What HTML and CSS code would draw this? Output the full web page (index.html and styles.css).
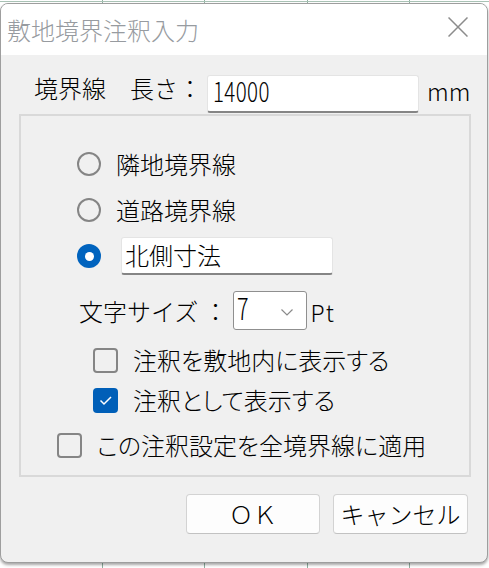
FILE: index.html
```html
<!DOCTYPE html>
<html lang="ja">
<head>
<meta charset="utf-8">
<title>敷地境界注釈入力</title>
<link rel="stylesheet" href="styles.css">
</head>
<body>
<div class="window">
  <div class="titlebar">
    <span class="title">敷地境界注釈入力</span>
    <svg class="close" width="20" height="20" viewBox="0 0 20 20"><path d="M0.5 0.5 L19.5 19.5 M19.5 0.5 L0.5 19.5" stroke="#8c8c8c" stroke-width="1.5" fill="none"/></svg>
  </div>
  <div class="client">
    <div class="length-row">
      <span class="label">境界線　長さ：</span>
      <div class="textbox length-box"><span class="digits">14000</span></div>
      <span class="unit">mm</span>
    </div>
    <div class="group">
      <div class="radio-row">
        <span class="radio"></span>
        <span class="text">隣地境界線</span>
      </div>
      <div class="radio-row">
        <span class="radio"></span>
        <span class="text">道路境界線</span>
      </div>
      <div class="radio-row">
        <span class="radio checked"></span>
        <div class="textbox name-box">北側寸法</div>
      </div>
      <div class="size-row">
        <span class="label">文字サイズ ：</span>
        <div class="combo">
          <span class="combo-value">7</span>
          <svg class="chevron" width="12" height="7" viewBox="0 0 12 7"><path d="M0.5 0.5 L6 6 L11.5 0.5" stroke="#8a8a8a" stroke-width="1.2" fill="none"/></svg>
        </div>
        <span class="unit pt">Pt</span>
      </div>
      <div class="check-row indent">
        <span class="check"></span>
        <span class="text prop">注釈を敷地内に表示する</span>
      </div>
      <div class="check-row indent">
        <span class="check checked"><svg width="25" height="25" viewBox="0 0 25 25"><path d="M7.5 12.5 L11 16 L18 9" stroke="#ffffff" stroke-width="1.5" fill="none"/></svg></span>
        <span class="text prop">注釈として表示する</span>
      </div>
      <div class="check-row all">
        <span class="check"></span>
        <span class="text prop">この注釈設定を全境界線に適用</span>
      </div>
    </div>
    <div class="buttons">
      <div class="button">ＯＫ</div>
      <div class="button">キャンセル</div>
    </div>
  </div>
</div>
</body>
</html>
```
FILE: styles.css
```css
html, body {
  margin: 0;
  padding: 0;
}
body {
  width: 489px;
  height: 568px;
  padding-top: 3px;
  box-sizing: border-box;
  overflow: hidden;
  background-color: #ffffff;
  background-image:
    linear-gradient(to bottom, transparent 1px, #a9c2b5 1px, #a9c2b5 2px, transparent 2px),
    linear-gradient(to right,
      transparent 102px, #8fb0a0 102px, #8fb0a0 103px, transparent 103px,
      transparent 204px, #8fb0a0 204px, #8fb0a0 205px, transparent 205px,
      transparent 307px, #8fb0a0 307px, #8fb0a0 308px, transparent 308px,
      transparent 409px, #8fb0a0 409px, #8fb0a0 410px, transparent 410px);
  font-family: "Noto Sans CJK JP", sans-serif;
  font-weight: 300;
  color: #000;
}
.window {
  width: 488px;
  height: 560px;
  box-sizing: border-box;
  border: 1px solid #9e9e9e;
  border-radius: 8px;
  background: #f0f0f0;
  box-shadow: 0 2px 3px rgba(0, 0, 0, 0.35);
  overflow: hidden;
  display: flex;
  flex-direction: column;
}
.titlebar {
  height: 51px;
  flex: none;
  background: #ffffff;
  display: flex;
  align-items: center;
  padding-left: 6px;
}
.title {
  font-size: 24px;
  line-height: 24px;
  color: #979ba0;
}
.close {
  margin-left: auto;
  margin-right: 19px;
  margin-top: -5px;
}
.client {
  flex: 1;
  display: flex;
  flex-direction: column;
}
.length-row {
  display: flex;
  align-items: flex-start;
  height: 38px;
  margin-top: 20px;
  margin-left: 33px;
}
.label {
  font-size: 24px;
  line-height: 24px;
  white-space: pre;
}
.length-row .label {
  margin-top: 1px;
}
.textbox {
  box-sizing: border-box;
  width: 212px;
  height: 38px;
  background: #ffffff;
  border: 1px solid #e4e4e4;
  border-bottom: 2px solid #858585;
  border-radius: 3px;
}
.length-box {
  margin-left: 5px;
  padding-left: 5px;
}
.digits {
  display: inline-block;
  font-size: 27px;
  line-height: 27px;
  margin-top: 1px;
  letter-spacing: 0.5px;
  transform: scaleX(0.76);
  transform-origin: left center;
}
.unit {
  font-size: 24px;
  line-height: 24px;
}
.length-row .unit {
  margin-left: 8px;
  margin-top: 4px;
}
.group {
  box-sizing: border-box;
  width: 452px;
  height: 363px;
  margin-top: 1px;
  margin-left: 18px;
  border: 2px solid #d9d9d9;
  padding-top: 29px;
  display: flex;
  flex-direction: column;
}
.radio-row {
  display: flex;
  align-items: center;
  height: 38px;
  margin-left: 56px;
  margin-bottom: 8px;
}
.radio {
  box-sizing: border-box;
  width: 24px;
  height: 24px;
  border: 2px solid #858585;
  border-radius: 50%;
  flex: none;
  display: flex;
  align-items: center;
  justify-content: center;
}
.radio.checked {
  border: none;
  background: #0063be;
}
.radio.checked::after {
  content: "";
  width: 9px;
  height: 9px;
  border-radius: 50%;
  background: #ffffff;
}
.text {
  font-size: 24px;
  line-height: 24px;
  margin-left: 15px;
  white-space: nowrap;
}
.prop {
  font-feature-settings: "palt" 1;
}
.name-box {
  margin-left: 20px;
  padding-left: 3px;
  padding-top: 5px;
  font-size: 24px;
  line-height: 24px;
}
.size-row {
  display: flex;
  align-items: flex-start;
  height: 39px;
  margin-left: 58px;
  margin-top: 8px;
}
.size-row .label {
  margin-top: 8px;
}
.combo {
  box-sizing: border-box;
  width: 74px;
  height: 39px;
  margin-left: 5px;
  background: #ffffff;
  border: 1px solid #8f8f8f;
  border-radius: 3px;
  display: flex;
  align-items: flex-start;
  padding-left: 3px;
}
.combo-value {
  display: inline-block;
  font-size: 30px;
  line-height: 30px;
  margin-top: 0px;
  transform: scaleX(0.72);
  transform-origin: left center;
}
.chevron {
  margin-left: auto;
  margin-right: 13px;
  margin-top: 17px;
}
.pt {
  margin-left: 4px;
  margin-top: 9px;
  font-size: 23px;
  letter-spacing: 1px;
}
.check-row {
  display: flex;
  align-items: center;
  height: 32px;
}
.check-row.indent {
  margin-left: 72px;
  margin-top: 14px;
}
.check-row.indent + .check-row.indent {
  margin-top: 8px;
}
.check-row.all {
  margin-left: 36px;
  margin-top: 13px;
}
.check {
  box-sizing: border-box;
  width: 25px;
  height: 25px;
  border: 2px solid #858585;
  border-radius: 4px;
  flex: none;
  display: flex;
}
.check.checked {
  border: none;
  background: #005fb8;
}
.check svg {
  display: block;
}
.buttons {
  display: flex;
  justify-content: flex-end;
  gap: 13px;
  margin-top: 17px;
  margin-right: 19px;
}
.button {
  box-sizing: border-box;
  width: 134px;
  height: 40px;
  background: #fdfdfd;
  border: 1px solid #d3d3d3;
  border-bottom-color: #c2c2c2;
  border-radius: 4px;
  display: flex;
  align-items: center;
  justify-content: center;
  font-size: 24px;
  line-height: 24px;
}
.button + .button {
  width: 135px;
}
```
